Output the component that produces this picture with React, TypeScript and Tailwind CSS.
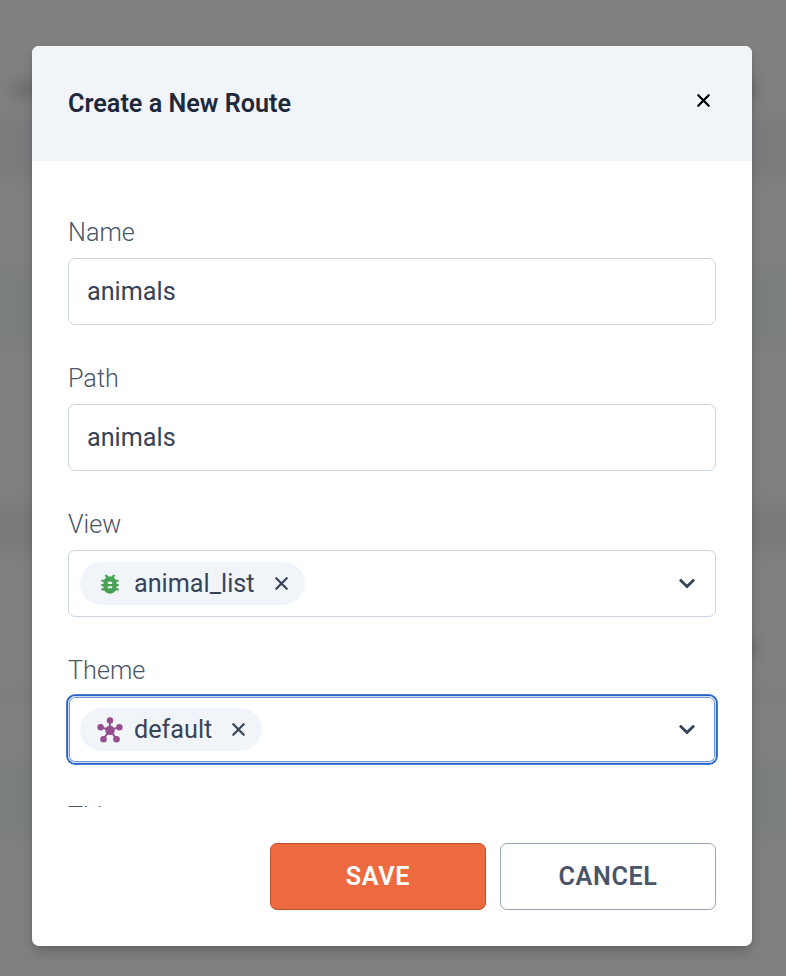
import type { ReactNode } from "react";
import { MdBugReport } from "react-icons/md";

function Cross({ size, className }: { size: number; className?: string }) {
  return (
    <svg width={size} height={size} viewBox="0 0 14 14" className={className} fill="none" stroke="currentColor" strokeWidth="2.4" strokeLinecap="round">
      <path d="M1.4 1.4 12.6 12.6M12.6 1.4 1.4 12.6" />
    </svg>
  );
}

function HubIcon() {
  return (
    <svg width="26" height="26" viewBox="0 0 26 26" fill="#954d8d" stroke="none">
      <path d="M13 13V3.5M13 13 3.7 10.2M13 13l9.3-2.8M13 13l-6.6 9.1M13 13l6.6 9.1" stroke="#954d8d" strokeWidth="1.9" />
      <circle cx="13" cy="13.4" r="4.7" />
      <circle cx="13" cy="3.4" r="3.2" />
      <circle cx="3.6" cy="10.2" r="3.2" />
      <circle cx="22.4" cy="10.2" r="3.2" />
      <circle cx="6.5" cy="22.2" r="3.3" />
      <circle cx="19.5" cy="22.2" r="3.3" />
    </svg>
  );
}

function Field({ label, children }: { label: string; children: ReactNode }) {
  return (
    <div className="h-[146px] shrink-0">
      <div className="h-[43px] pt-px text-[25.2px] leading-[34px] font-[330] text-[#4a5568]">{label}</div>
      {children}
    </div>
  );
}

function TextBox({ value }: { value: string }) {
  return (
    <div className="flex h-[67px] items-center rounded-[7px] border border-[#cbd5e0] px-[18px] text-[25.2px] text-[#374357]">
      {value}
    </div>
  );
}

function Picker({ icon, value, focused }: { icon: ReactNode; value: string; focused?: boolean }) {
  return (
    <div
      className={`flex h-[67px] items-center justify-between rounded-[7px] border pr-5 pl-[11px] text-[#374357] ${
        focused
          ? "border-[#d3dae6] shadow-[0_0_0_1px_#2560c8,0_0_0_2px_#4c7fdb,inset_0_0_0_1px_#6f9ae0]"
          : "border-[#cbd5e0]"
      }`}
    >
      <div className="flex h-[43px] items-center rounded-full bg-[#f1f5f9] pr-[17px] pl-4 text-[25.2px]">
        <span className="mr-[10px] flex w-7 justify-center">{icon}</span>
        <span>{value}</span>
        <Cross size={13} className="ml-5" />
      </div>
      <svg width="16" height="10" viewBox="0 0 16 10" fill="none" stroke="currentColor" strokeWidth="2.8" strokeLinecap="round">
        <path d="M1.8 1.4 8 7.6 14.2 1.4" />
      </svg>
    </div>
  );
}

function Backdrop() {
  return (
    <div className="absolute inset-0 overflow-hidden bg-[#808080]">
      <div className="absolute -inset-x-10 inset-y-0 flex flex-col blur-[7px]">
        <div className="h-[118px]" />
        <div className="h-[60px] bg-[#7a7b7c]" />
        <div className="h-[90px]" />
        <div className="h-[79px] bg-[#7a7e7c]" />
        <div className="h-[155px]" />
        <div className="h-[52px] bg-[#797a7b]" />
        <div className="h-[138px]" />
        <div className="h-[3px] bg-[#777777]" />
        <div className="h-[68px]" />
        <div className="h-[76px] bg-[#7a7e7c]" />
      </div>
      <div className="absolute top-[81px] left-[12px] h-[18px] w-[60px] bg-[#707070] blur-[6px]" />
      <div className="absolute top-[81px] left-[725px] h-[18px] w-[32px] bg-[#6c6c6c] blur-[6px]" />
      <div className="absolute top-[640px] left-[725px] h-[16px] w-[32px] bg-[#6c6f6d] blur-[6px]" />
    </div>
  );
}

export default function App() {
  return (
    <div className="relative h-[976px] w-[786px] overflow-hidden px-8 pt-[46px] font-[Roboto,sans-serif]">
      <Backdrop />
      <div className="relative flex h-[900px] w-[720px] flex-col overflow-hidden rounded-[7px] bg-white shadow-[0_7px_14px_-2px_rgba(0,0,0,0.2),0_2px_5px_-1px_rgba(0,0,0,0.12)]">
        <header className="flex h-[115px] shrink-0 items-center justify-between bg-[#f1f5f9] pr-[42px] pl-9">
          <h1 className="text-[25.2px] font-semibold text-[#1f293b]">Create a New Route</h1>
          <Cross size={13} className="mb-[6px] text-black" />
        </header>
        <main className="flex h-[646px] shrink-0 flex-col overflow-hidden px-9 pt-[54px]">
          <Field label="Name">
            <TextBox value="animals" />
          </Field>
          <Field label="Path">
            <TextBox value="animals" />
          </Field>
          <Field label="View">
            <Picker icon={<MdBugReport size={26} color="#48a054" />} value="animal_list" />
          </Field>
          <Field label="Theme">
            <Picker icon={<HubIcon />} value="default" focused />
          </Field>
          <Field label="Title">
            <TextBox value="" />
          </Field>
        </main>
        <footer className="flex justify-end gap-[14px] px-9 pt-9">
          <button className="h-[67px] w-[216px] rounded-[7px] border border-[#b9502f] bg-[#ed6a40] text-[25.2px] font-semibold tracking-[0.63px] text-white">
            SAVE
          </button>
          <button className="h-[67px] w-[216px] rounded-[7px] border border-[#97a3b8] bg-white text-[25.2px] font-semibold tracking-[0.6px] text-[#4a5568]">
            CANCEL
          </button>
        </footer>
      </div>
    </div>
  );
}
